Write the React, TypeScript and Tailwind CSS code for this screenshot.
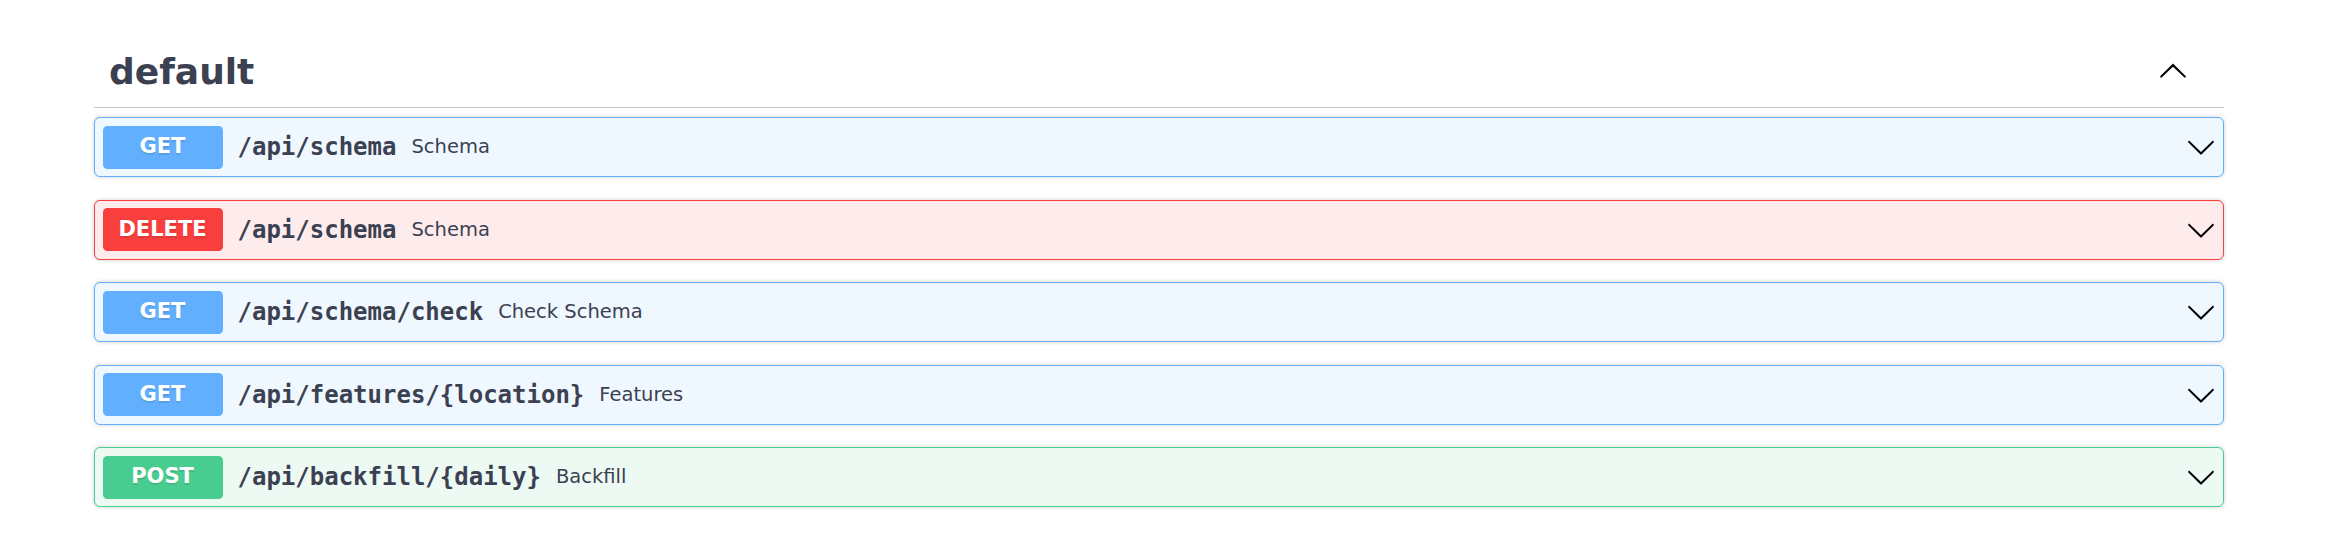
import React from "react";

type Op = { method: "GET" | "DELETE" | "POST"; path: string; desc: string };

const ops: Op[] = [
  { method: "GET", path: "/api/schema", desc: "Schema" },
  { method: "DELETE", path: "/api/schema", desc: "Schema" },
  { method: "GET", path: "/api/schema/check", desc: "Check Schema" },
  { method: "GET", path: "/api/features/{location}", desc: "Features" },
  { method: "POST", path: "/api/backfill/{daily}", desc: "Backfill" },
];

const styles: Record<Op["method"], { block: string; badge: string }> = {
  GET: { block: "bg-[#eff7ff] border-[#61affe]", badge: "bg-[#61affe]" },
  DELETE: { block: "bg-[#feecec] border-[#f93e3e]", badge: "bg-[#f93e3e]" },
  POST: { block: "bg-[#edfaf4] border-[#49cc90]", badge: "bg-[#49cc90]" },
};

function ArrowDown() {
  return (
    <svg width="30" height="30" viewBox="0 0 20 20" className="shrink-0" fill="#000">
      <path d="M17.418 6.109c.272-.268.709-.268.979 0s.271.701 0 .969l-7.908 7.83c-.27.268-.707.268-.979 0l-7.908-7.83c-.27-.268-.27-.701 0-.969.271-.268.709-.268.979 0L10 13.25l7.418-7.141z" />
    </svg>
  );
}

function ArrowUp() {
  return (
    <svg width="30" height="30" viewBox="0 0 20 20" className="shrink-0" fill="#000">
      <path d="M17.418 14.908c.272.268.709.268.979 0s.271-.701 0-.969l-7.908-7.83c-.27-.268-.707-.268-.979 0l-7.908 7.83c-.27.268-.27.701 0 .969.271.268.709.268.979 0L10 7.767l7.418 7.141z" />
    </svg>
  );
}

export default function App() {
  return (
    <div className="w-full min-h-[548px] bg-white pt-[36px] font-['DejaVu_Sans',sans-serif] text-[#3b4151]">
      <div className="ml-[94px] w-[2130px]">
        <div className="flex items-center justify-between border-b border-[#c4c5ca] pl-[15px] pr-[36px] pt-[15px] pb-[14px]">
          <h3 className="text-[36px] leading-[42px] font-bold text-[#3b4151]">default</h3>
          <div className="mb-[4px]">
            <ArrowUp />
          </div>
        </div>
        <div className="mt-[9px] flex flex-col gap-[22.5px]">
          {ops.map((op, i) => (
            <div
              key={i}
              className={`flex h-[60px] items-center rounded-[6px] border px-[7.5px] shadow-[0_0_4px_rgba(0,0,0,0.19)] ${styles[op.method].block}`}
            >
              <div
                className={`flex h-[43px] w-[120px] shrink-0 items-center justify-center rounded-[4.5px] text-[21px] font-bold text-white [text-shadow:0_1.5px_0_rgba(0,0,0,0.1)] ${styles[op.method].badge}`}
              >
                {op.method}
              </div>
              <span className="px-[15px] font-['DejaVu_Sans_Mono',monospace] text-[24px] font-bold text-[#3b4151]">
                {op.path}
              </span>
              <span className="flex-1 text-[19.5px] text-[#3b4151]">{op.desc}</span>
              <ArrowDown />
            </div>
          ))}
        </div>
      </div>
    </div>
  );
}
